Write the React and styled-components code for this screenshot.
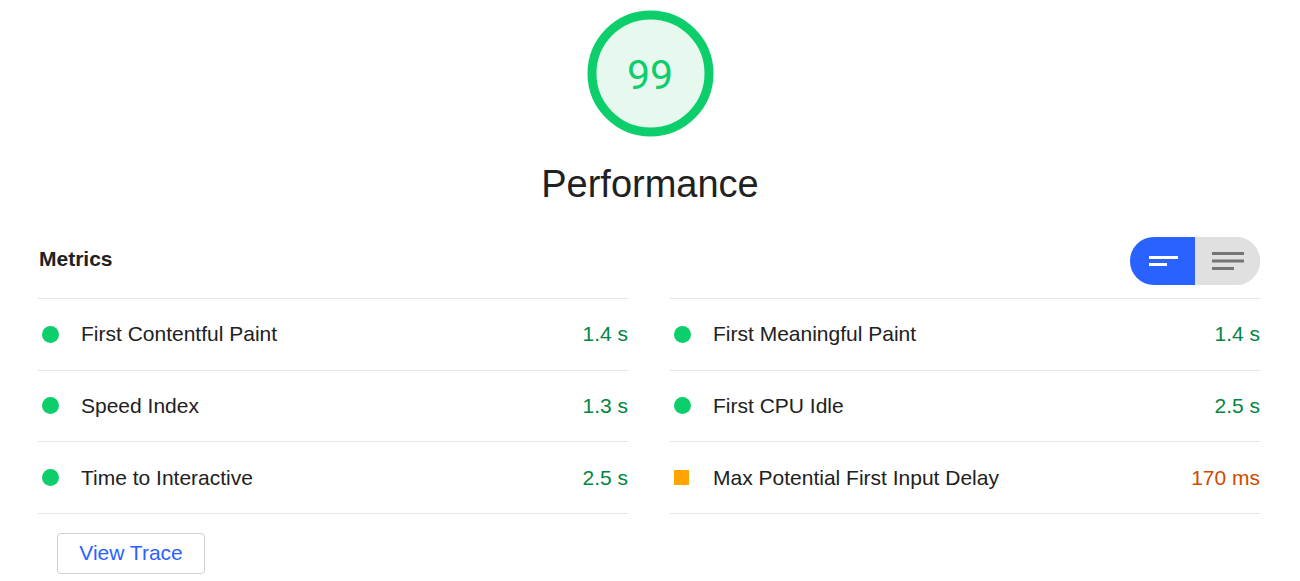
import React from "react";
import styled, { createGlobalStyle } from "styled-components";

const Global = createGlobalStyle`
  html, body { margin: 0; padding: 0; background: #fff; }
  body { font-family: "Liberation Sans", Arial, sans-serif; color: #212121; }
  * { box-sizing: border-box; }
`;

const Page = styled.div`
  width: 1300px;
  height: 581px;
  overflow: hidden;
  display: flex;
  flex-direction: column;
`;

const Header = styled.header`
  display: flex;
  flex-direction: column;
  align-items: center;
  padding-top: 10px;
`;

const GaugeWrap = styled.div`
  position: relative;
  width: 127px;
  height: 127px;
`;

const GaugeNumber = styled.div`
  position: absolute;
  inset: 0;
  display: flex;
  align-items: center;
  justify-content: center;
  font-family: Roboto, "Liberation Sans", sans-serif;
  font-size: 41px;
  color: #0cce6b;
  padding-top: 2px;
`;

const Title = styled.h1`
  margin: 24px 0 0;
  font-weight: 400;
  font-size: 38px;
  line-height: 46px;
  color: #212121;
  font-family: "Liberation Sans", Arial, sans-serif;
`;

const Section = styled.section`
  padding: 30px 40px 0 38px;
`;

const SectionHead = styled.div`
  display: flex;
  align-items: center;
  justify-content: space-between;
  margin-bottom: 13px;
`;

const Heading = styled.h2`
  margin: 0 0 0 1px;
  font-size: 21px;
  font-weight: 700;
  color: #212121;
  padding-bottom: 5px;
`;

const Toggle = styled.div`
  display: flex;
  width: 130px;
  height: 48px;
  border-radius: 24px;
  overflow: hidden;
  background: #e0e0e0;
`;

const ToggleHalf = styled.button`
  flex: 1;
  border: 0;
  margin: 0;
  padding: 0;
  display: flex;
  align-items: center;
  justify-content: center;
  background: ${(p) => (p.$active ? "#2962ff" : "#e0e0e0")};
`;

const Grid = styled.div`
  display: grid;
  grid-template-columns: 590px 590px;
  column-gap: 42px;
`;

const Column = styled.div`
  display: flex;
  flex-direction: column;
  border-bottom: 1.5px solid #e6e6e6;
`;

const Row = styled.div`
  display: flex;
  align-items: center;
  height: 71.67px;
  border-top: 1.5px solid #e6e6e6;
  font-size: 21px;
`;

const Indicator = styled.span`
  flex: 0 0 auto;
  width: ${(p) => (p.$shape === "square" ? "15px" : "17px")};
  height: ${(p) => (p.$shape === "square" ? "15px" : "17px")};
  margin: 0 ${(p) => (p.$shape === "square" ? "24px" : "22px")} 0 4px;
  border-radius: ${(p) => (p.$shape === "square" ? "0" : "50%")};
  background: ${(p) => (p.$shape === "square" ? "#ffa400" : "#0cce6b")};
`;

const Label = styled.span`
  flex: 1;
  color: #212121;
`;

const Value = styled.span`
  color: ${(p) => (p.$level === "average" ? "#d04900" : "#018642")};
`;

const Footer = styled.div`
  padding: 19px 0 0 19px;
`;

const TraceButton = styled.button`
  width: 148px;
  height: 41px;
  border: 1.5px solid #cfcfcf;
  border-radius: 4px;
  background: #fff;
  color: #2962ff;
  font-family: "Liberation Sans", Arial, sans-serif;
  font-size: 21px;
  padding: 0;
`;

const left = [
  { label: "First Contentful Paint", value: "1.4 s" },
  { label: "Speed Index", value: "1.3 s" },
  { label: "Time to Interactive", value: "2.5 s" },
];
const right = [
  { label: "First Meaningful Paint", value: "1.4 s" },
  { label: "First CPU Idle", value: "2.5 s" },
  { label: "Max Potential First Input Delay", value: "170 ms", level: "average" },
];

function MetricColumn({ items }) {
  return (
    <Column>
      {items.map((m) => (
        <Row key={m.label}>
          <Indicator $shape={m.level === "average" ? "square" : "circle"} />
          <Label>{m.label}</Label>
          <Value $level={m.level}>{m.value}</Value>
        </Row>
      ))}
    </Column>
  );
}

export default function App() {
  return (
    <Page>
      <Global />
      <Header>
        <GaugeWrap>
          <svg width="127" height="127" viewBox="0 0 127 127">
            <circle cx="63.5" cy="63.5" r="58.5" fill="#e7f9ef" stroke="#0cce6b" strokeWidth="9" />
          </svg>
          <GaugeNumber>99</GaugeNumber>
        </GaugeWrap>
        <Title>Performance</Title>
      </Header>
      <Section>
        <SectionHead>
          <Heading>Metrics</Heading>
          <Toggle>
            <ToggleHalf $active aria-label="compact">
              <svg width="30" height="14" viewBox="0 0 30 14">
                <rect x="1" y="2" width="29" height="3" fill="#fff" />
                <rect x="1" y="9" width="18" height="3" fill="#fff" />
              </svg>
            </ToggleHalf>
            <ToggleHalf aria-label="expanded">
              <svg width="34" height="20" viewBox="0 0 34 20">
                <rect x="1" y="1" width="32" height="3" fill="#757575" />
                <rect x="1" y="8.5" width="32" height="3" fill="#757575" />
                <rect x="1" y="16" width="22" height="3" fill="#757575" />
              </svg>
            </ToggleHalf>
          </Toggle>
        </SectionHead>
        <Grid>
          <MetricColumn items={left} />
          <MetricColumn items={right} />
        </Grid>
        <Footer>
          <TraceButton>View Trace</TraceButton>
        </Footer>
      </Section>
    </Page>
  );
}
